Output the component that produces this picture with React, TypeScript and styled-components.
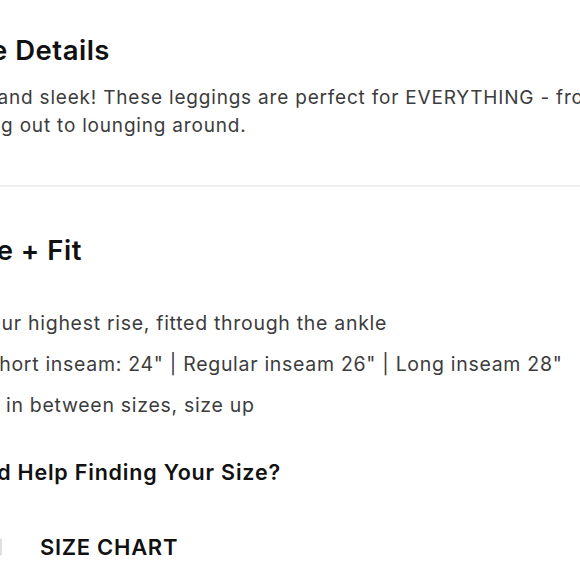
import React from "react";
import styled, { createGlobalStyle } from "styled-components";

const GlobalStyle = createGlobalStyle`
  html, body {
    margin: 0;
    padding: 0;
    background: #ffffff;
  }
  body {
    font-family: Inter, Lato, "Liberation Sans", sans-serif;
    -webkit-font-smoothing: antialiased;
  }
`;

const Viewport = styled.div`
  width: 580px;
  height: 580px;
  overflow: hidden;
  background: #ffffff;
`;

const Panel = styled.div`
  width: 780px;
  margin-left: -41px;
  display: flex;
  flex-direction: column;
`;

const Section = styled.section<{ $divider?: boolean; $top: number }>`
  padding-top: ${(p) => p.$top}px;
  ${(p) => (p.$divider ? "border-bottom: 2px solid #efefef; padding-bottom: 45px;" : "")}
`;

const Heading = styled.h2`
  margin: 0 0 14px -4px;
  font-size: 27.5px;
  line-height: 40px;
  font-weight: 600;
  color: #111111;
  letter-spacing: 0.5px;
`;

const Body = styled.p`
  margin: 0;
  max-width: 680px;
  font-size: 19px;
  line-height: 28px;
  color: #3c3c3c;
  letter-spacing: 0.8px;
  text-indent: -7px;
`;

const List = styled.ul`
  margin: 33px 0 0;
  padding-left: 27px;
  list-style: disc;
  color: #3c3c3c;
`;

const Item = styled.li`
  font-size: 19.5px;
  line-height: 41px;
  letter-spacing: 0.7px;
`;

const Subheading = styled.h3`
  margin: 31px 0 0 -6px;
  font-size: 21.5px;
  line-height: 30px;
  font-weight: 600;
  color: #111111;
  letter-spacing: 0.8px;
`;

const ChartLink = styled.a`
  margin-top: 47px;
  display: flex;
  align-items: center;
  gap: 38px;
  color: #111111;
  text-decoration: none;
  font-size: 22px;
  font-weight: 600;
  letter-spacing: 0.7px;
`;

const RulerIcon = styled.svg`
  margin-left: 17px;
  flex: none;
`;

const Ruler = () => (
  <RulerIcon width="26" height="20" viewBox="0 0 26 20" fill="none" stroke="#d6d6d6" strokeWidth="1.5">
    <rect x="1" y="2" width="24" height="16" rx="1" />
    <path d="M6 2v5M11 2v7M16 2v5M21 2v7" />
  </RulerIcon>
);

export default function App() {
  return (
    <Viewport>
      <GlobalStyle />
      <Panel>
        <Section $divider $top={30}>
          <Heading>The Details</Heading>
          <Body>
            Soft and sleek! These leggings are perfect for EVERYTHING - from going out to lounging around.
          </Body>
        </Section>
        <Section $top={43}>
          <Heading>Size + Fit</Heading>
          <List>
            <Item>Our highest rise, fitted through the ankle</Item>
            <Item>Short inseam: 24" | Regular inseam 26" | Long inseam 28"</Item>
            <Item>If in between sizes, size up</Item>
          </List>
          <Subheading>Need Help Finding Your Size?</Subheading>
          <ChartLink href="#">
            <Ruler />
            SIZE CHART
          </ChartLink>
        </Section>
      </Panel>
    </Viewport>
  );
}
